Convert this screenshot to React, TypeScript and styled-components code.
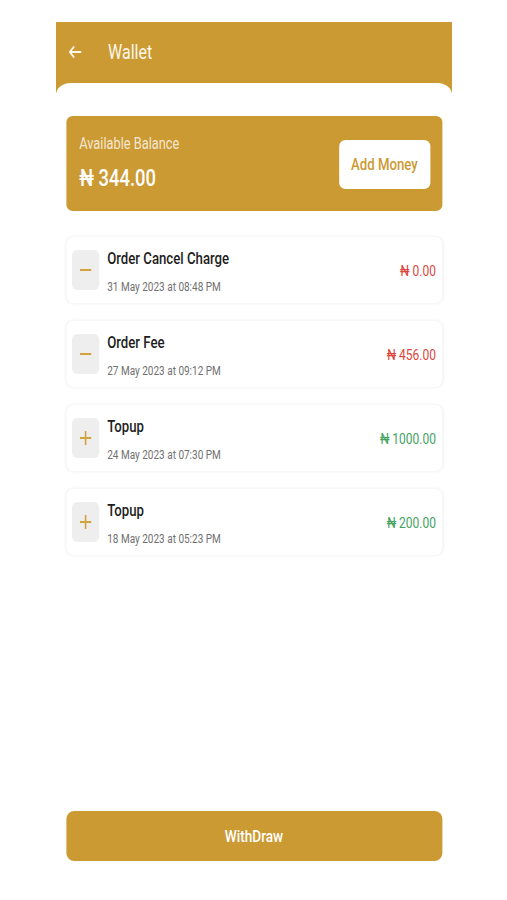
import styled, { createGlobalStyle } from "styled-components";

// Wallet screen. The source capture is squeezed sideways, so the phone screen
// is laid out at its natural width and narrowed with one scaleX on the frame.

const GOLD = "#cc9a33";
const SQUEEZE = 0.8;
const SCREEN_W = 396;

const Global = createGlobalStyle`
  html, body { margin: 0; padding: 0; background: #fff; }
  body { font-family: Roboto, "Noto Sans", Arial, sans-serif; }
  * { box-sizing: border-box; }
`;

const Page = styled.div`
  width: 507px;
  padding: 22px 0 0 56px;
`;
const Frame = styled.div`
  width: ${SCREEN_W}px;
  height: 858px;
`;
const Screen = styled.div`
  width: ${SCREEN_W / SQUEEZE}px;
  height: 100%;
  transform: scaleX(${SQUEEZE});
  transform-origin: left top;
  display: flex;
  flex-direction: column;
`;
const Header = styled.header`
  background: ${GOLD};
  height: 73px;
  padding: 18px 0 0 16px;
  flex: none;
`;
const TitleRow = styled.div`
  display: flex;
  align-items: center;
  height: 24px;
  gap: 33px;
  color: #fff8ec;
`;
const Title = styled.h1`
  margin: 0;
  font-size: 20px;
  font-weight: 400;
  line-height: 24px;
`;
const Sheet = styled.main`
  flex: 1;
  margin-top: -12px;
  background: #fff;
  border-radius: 18px 18px 0 0 / 12px 12px 0 0;
  padding: 33px 12.5px 19px;
  display: flex;
  flex-direction: column;
`;
const BalanceCard = styled.section`
  height: 95px;
  background: ${GOLD};
  border-radius: 8px / 6px;
  display: flex;
  align-items: center;
  justify-content: space-between;
  padding: 0 15px 0 16.5px;
`;
const BalanceLabel = styled.div`
  font-size: 16px;
  line-height: 18px;
  color: rgba(255, 255, 255, 0.78);
`;
const BalanceValue = styled.div`
  margin-top: 13px;
  font-size: 23px;
  line-height: 26px;
  font-weight: 500;
  color: #fff;
`;
const AddButton = styled.button`
  width: 114px;
  height: 49px;
  border: 0;
  border-radius: 8px / 6px;
  background: #fff;
  color: ${GOLD};
  font: 500 16.5px Roboto, sans-serif;
  margin-top: 2px;
`;
const List = styled.ul`
  list-style: none;
  margin: 26px 0 0;
  padding: 0;
  display: flex;
  flex-direction: column;
  gap: 18px;
`;
const Row = styled.li`
  height: 66px;
  background: #fff;
  border-radius: 8px;
  box-shadow: 0 0 4px rgba(0, 0, 0, 0.09);
  display: flex;
  align-items: center;
  padding: 0 7.5px;
`;
const Sign = styled.div`
  width: 34px;
  height: 40px;
  flex: none;
  border-radius: 6px;
  background: #eeeeee;
  display: flex;
  align-items: center;
  justify-content: center;
  color: #d4a23c;
`;
const Info = styled.div`
  flex: 1;
  margin-left: 10px;
  margin-top: 3px;
`;
const RowTitle = styled.div`
  font-size: 16.5px;
  line-height: 20px;
  font-weight: 500;
  color: #1d1d1d;
`;
const RowDate = styled.div`
  margin-top: 10px;
  font-size: 12.5px;
  line-height: 16px;
  color: #707070;
`;
const Amount = styled.div<{ $credit: boolean }>`
  font-size: 15px;
  margin-top: 2px;
  color: ${({ $credit }) => ($credit ? "#43a25f" : "#d9473d")};
`;
const WithdrawButton = styled.button`
  margin-top: auto;
  height: 50px;
  width: 100%;
  border: 0;
  border-radius: 10px / 8px;
  background: ${GOLD};
  color: #fff;
  font: 500 17px Roboto, sans-serif;
`;

const txns = [
  { title: "Order Cancel Charge", date: "31 May 2023 at 08:48 PM", amount: "0.00", credit: false },
  { title: "Order Fee", date: "27 May 2023 at 09:12 PM", amount: "456.00", credit: false },
  { title: "Topup", date: "24 May 2023 at 07:30 PM", amount: "1000.00", credit: true },
  { title: "Topup", date: "18 May 2023 at 05:23 PM", amount: "200.00", credit: true },
];

function BackArrow() {
  return (
    <svg width="16" height="12" viewBox="0 0 16 12" aria-hidden="true">
      <path d="M15.2 6H1.2M6.2 1L1.2 6l5 5" fill="none" stroke="currentColor"
            strokeWidth="1.8" strokeLinecap="round" strokeLinejoin="round" />
    </svg>
  );
}

function SignIcon({ plus }: { plus: boolean }) {
  return (
    <svg width="16" height="16" viewBox="0 0 16 16" aria-hidden="true">
      <path d={plus ? "M1 8h14M8 1v14" : "M1 8h14"} stroke="currentColor" strokeWidth="2" />
    </svg>
  );
}

export default function App() {
  return (
    <Page>
      <Global />
      <Frame>
        <Screen>
          <Header>
            <TitleRow>
              <BackArrow />
              <Title>Wallet</Title>
            </TitleRow>
          </Header>
          <Sheet>
            <BalanceCard>
              <div>
                <BalanceLabel>Available Balance</BalanceLabel>
                <BalanceValue>₦ 344.00</BalanceValue>
              </div>
              <AddButton>Add Money</AddButton>
            </BalanceCard>
            <List>
              {txns.map((t, i) => (
                <Row key={i}>
                  <Sign><SignIcon plus={t.credit} /></Sign>
                  <Info>
                    <RowTitle>{t.title}</RowTitle>
                    <RowDate>{t.date}</RowDate>
                  </Info>
                  <Amount $credit={t.credit}>₦ {t.amount}</Amount>
                </Row>
              ))}
            </List>
            <WithdrawButton>WithDraw</WithdrawButton>
          </Sheet>
        </Screen>
      </Frame>
    </Page>
  );
}
